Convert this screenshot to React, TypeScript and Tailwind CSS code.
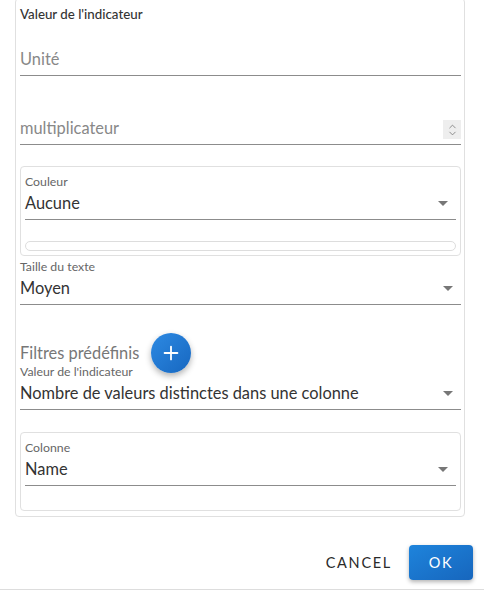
import { ChevronDown, ChevronUp, Plus } from "lucide-react";

const font = { fontFamily: "Lato, 'Noto Sans', sans-serif" };

function Arrow() {
  return (
    <svg width="10" height="5" viewBox="0 0 10 5" className="shrink-0">
      <path d="M0 0 L10 0 L5 5 Z" fill="#777" />
    </svg>
  );
}

function SelectField({ label, value }: { label: string; value: string }) {
  return (
    <div>
      <div className="h-[16px] text-[12.3px] leading-[16px] text-[#666]">{label}</div>
      <div className="mt-[1px] flex h-[29px] items-start border-b border-[#8c8c8c] pb-[4px]">
        <span className="flex-1 text-[16.4px] leading-[24px] text-[#333]">{value}</span>
        <span className="flex h-[24px] items-center pr-[8px]">
          <Arrow />
        </span>
      </div>
    </div>
  );
}

export default function App() {
  return (
    <div className="h-[590px] w-[484px] overflow-hidden border-b border-[#ddd] bg-white" style={font}>
      <div className="ml-[15px] mt-[-2px] w-[450px] rounded-[4px] border border-[#e0e0e0] pb-[5px] pl-[4px] pr-[3px]">
        <div className="pt-[5px] text-[13.3px] font-medium leading-[20px] text-[#333]">Valeur de l'indicateur</div>

        <div className="mt-[23px] h-[29px] border-b border-[#8c8c8c] pb-[4px] text-[16.4px] leading-[24px] text-[#888]">
          Unité
        </div>

        <div className="mt-[40px] flex h-[29px] items-start border-b border-[#8c8c8c] pb-[4px]">
          <span className="flex-1 text-[16.4px] leading-[24px] text-[#888]">multiplicateur</span>
          <span className="mt-[4px] flex h-[19px] w-[18px] flex-col items-center justify-center bg-[#eee] text-[#777]">
            <ChevronUp size={11} strokeWidth={1.75} className="-mb-[2px]" />
            <ChevronDown size={11} strokeWidth={1.75} className="-mt-[2px]" />
          </span>
        </div>

        <div className="mt-[21px] h-[90px] rounded-[4px] border border-[#e0e0e0] px-[4px] pt-[7px]">
          <SelectField label="Couleur" value="Aucune" />
          <div className="mt-[21px] h-[10px] rounded-full border border-[#ddd]" />
        </div>

        <div className="mt-[3px]">
          <SelectField label="Taille du texte" value="Moyen" />
        </div>

        <div className="mt-[28px] flex h-[40px] items-center gap-[12px]">
          <span className="text-[16.4px] leading-[24px] text-[#777]">Filtres prédéfinis</span>
          <span className="flex h-[40px] w-[40px] items-center justify-center rounded-full bg-gradient-to-br from-[#2d8ae3] to-[#1767c0] text-white shadow-[0_3px_6px_rgba(0,0,0,0.3)]">
            <Plus size={22} strokeWidth={2} />
          </span>
        </div>

        <div className="mt-[-9px]">
          <SelectField label="Valeur de l'indicateur" value="Nombre de valeurs distinctes dans une colonne" />
        </div>

        <div className="mt-[22px] h-[79px] rounded-[4px] border border-[#e0e0e0] px-[4px] pt-[7px]">
          <SelectField label="Colonne" value="Name" />
        </div>
      </div>

      <div className="mt-[28px] flex justify-end gap-[9px] pr-[11px]">
        <button className="h-[35px] px-[8px] text-[14.5px] tracking-[1.7px] text-[#2a2a2a]">CANCEL</button>
        <button className="h-[35px] w-[64px] rounded-[4px] bg-gradient-to-br from-[#1e84dc] to-[#1766bd] text-[14.5px] tracking-[1.7px] text-white shadow-[0_2px_4px_rgba(0,0,0,0.3)]">
          OK
        </button>
      </div>
    </div>
  );
}
